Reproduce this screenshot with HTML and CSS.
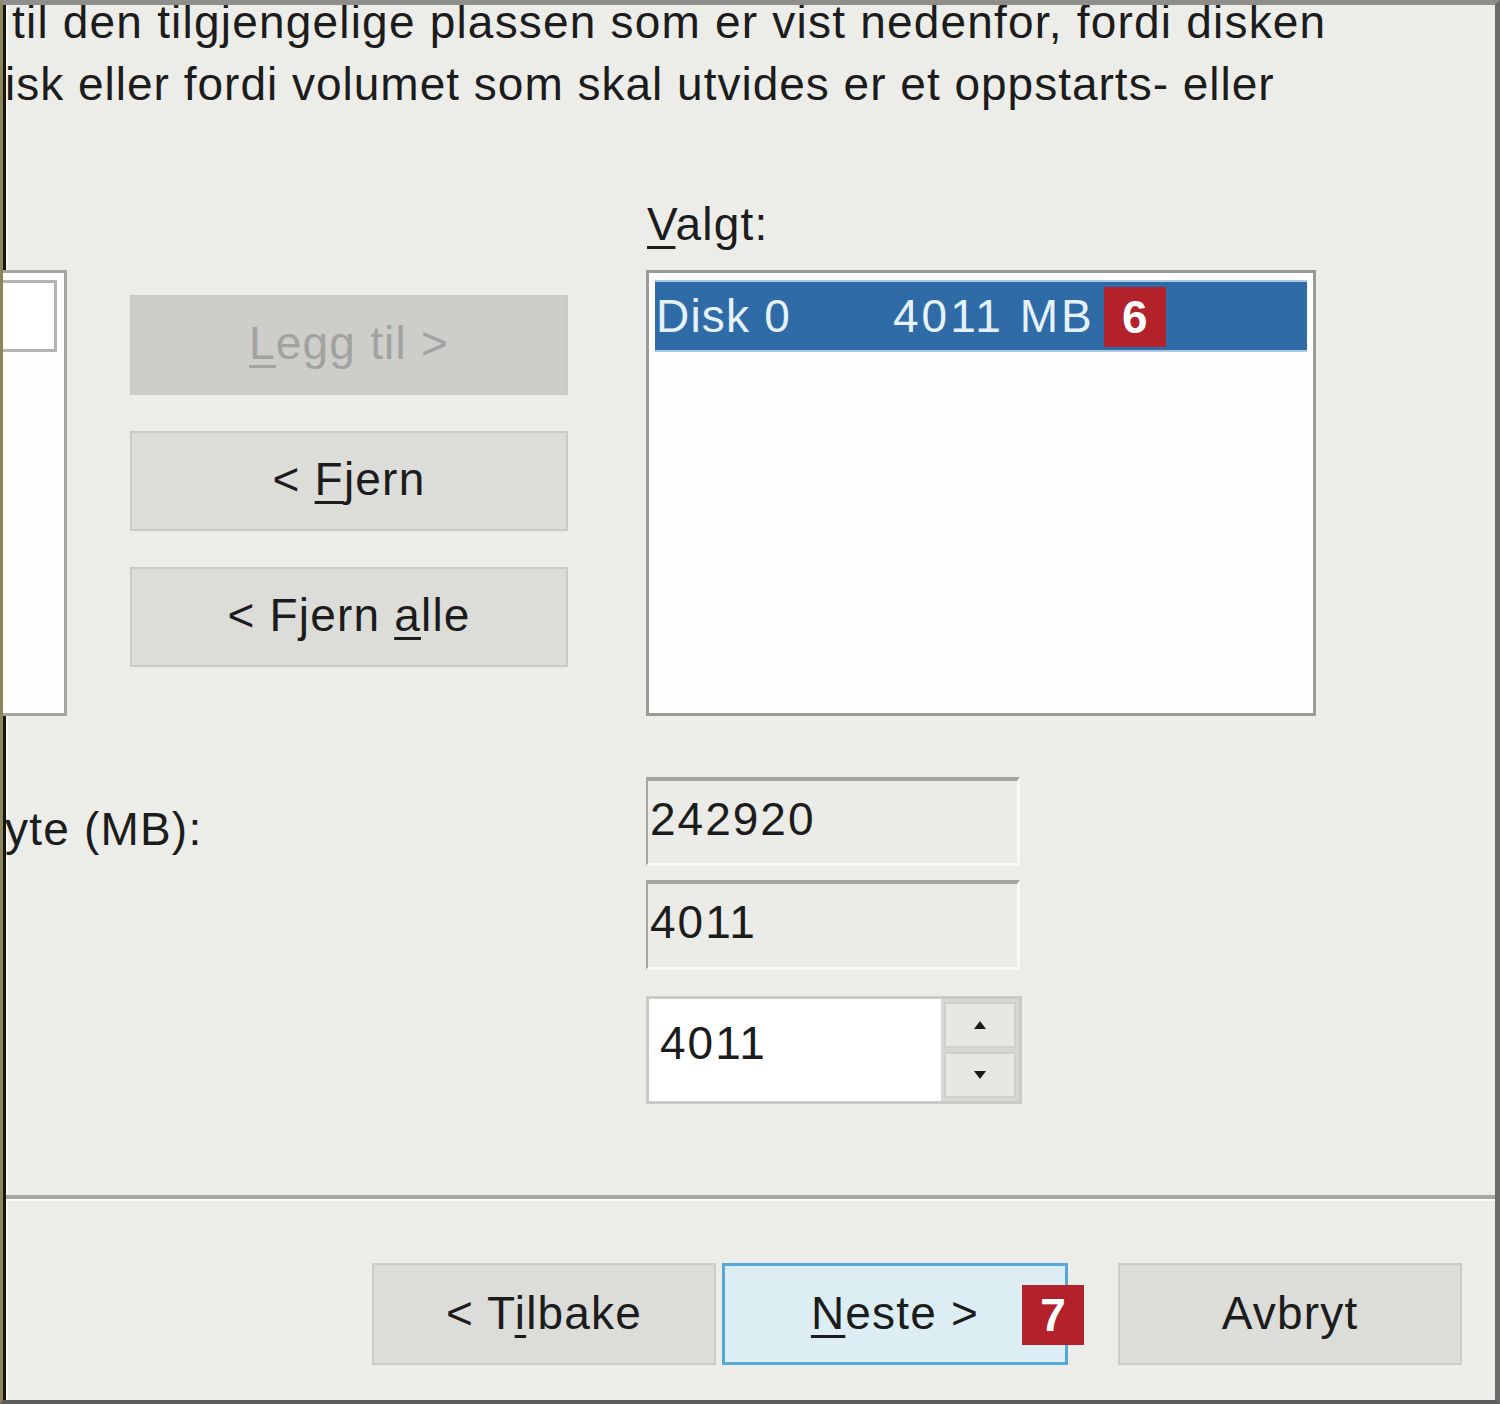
FILE: index.html
```html
<!DOCTYPE html>
<html>
<head>
<meta charset="utf-8">
<link rel="stylesheet" href="styles.css">
</head>
<body>
<div class="dialog">
  <div class="intro">
    <div class="line l1">til den tilgjengelige plassen som er vist nedenfor, fordi disken</div>
    <div class="line l2">isk eller fordi volumet som skal utvides er et oppstarts- eller</div>
  </div>

  <div class="main">
    <div class="leftcol">
      <div class="listbox-left">
        <div class="left-item"></div>
      </div>
    </div>
    <div class="midcol">
      <div class="btn disabled"><span><u>L</u>egg til &gt;</span></div>
      <div class="btn"><span>&lt; <u>F</u>jern</span></div>
      <div class="btn"><span>&lt; Fjern <u>a</u>lle</span></div>
    </div>
    <div class="rightcol">
      <div class="label"><u>V</u>algt:</div>
      <div class="listbox">
        <div class="selrow">
          <span class="disk">Disk 0</span>
          <span class="size">4011 MB</span>
          <span class="badge">6</span>
        </div>
      </div>
    </div>
  </div>

  <div class="lower">
    <div class="lowlabel">yte (MB):</div>
    <div class="fields">
      <div class="ro">242920</div>
      <div class="ro ro2">4011</div>
      <div class="spin">
        <div class="spin-input">4011</div>
        <div class="spin-btns">
          <div class="sbtn"><svg width="14" height="10" viewBox="0 0 14 10"><path d="M7 1 L13 9 L1 9 Z" fill="#1a1a1a"/></svg></div>
          <div class="sbtn"><svg width="14" height="10" viewBox="0 0 14 10"><path d="M1 1 L13 1 L7 9 Z" fill="#1a1a1a"/></svg></div>
        </div>
      </div>
    </div>
  </div>

  <div class="sep"></div>

  <div class="footer">
    <div class="fbtn"><span>&lt; T<u>i</u>lbake</span></div>
    <div class="fbtn primary"><span><u>N</u>este &gt;</span><span class="badge badge7">7</span></div>
    <div class="fbtn"><span>Avbryt</span></div>
  </div>
</div>
</body>
</html>
```

FILE: styles.css
```css
* { box-sizing: border-box; }
html, body {
  margin: 0;
  padding: 0;
  background: #ecece8;
}
body {
  font-family: "Liberation Sans", Arial, sans-serif;
  color: #1c1c1c;
  width: 1500px;
  height: 1404px;
  overflow: hidden;
  font-size: 46px;
  line-height: 61px;
  letter-spacing: 1.2px;
}
u {
  text-decoration: underline;
  text-decoration-thickness: 3px;
  text-underline-offset: 6px;
}

.dialog {
  width: 1500px;
  height: 1404px;
  background: #ecece8;
  border-top: 5px solid #8e8e8b;
  border-right: 5px solid #6a6a68;
  border-bottom: 4px solid #5c5c5a;
  border-left: 3px solid #8d8458;
  box-shadow: inset 3px 0 0 #151515, inset 5px 0 0 #f6f6f3;
  overflow: hidden;
}

.intro {
  white-space: nowrap;
}
.l1 {
  padding-left: 9px;
  line-height: 34px;
}
.l2 {
  padding-left: 2px;
  margin-top: 15px;
  letter-spacing: 1px;
}

.main {
  display: flex;
  margin-top: 79px;
}
.leftcol {
  width: 64px;
  padding-top: 76px;
}
.listbox-left {
  height: 446px;
  background: #fefefe;
  border: 3px solid #a5a5a3;
  border-left: none;
  padding-top: 7px;
  padding-right: 7px;
}
.left-item {
  height: 72px;
  border: 3px solid #b4b4b1;
  border-left: none;
  background: #fff;
}

.midcol {
  margin-left: 63px;
  width: 438px;
  padding-top: 101px;
  display: flex;
  flex-direction: column;
  gap: 36px;
}
.btn {
  height: 100px;
  background: #dcdcd9;
  border: 2px solid #cacac7;
  display: flex;
  align-items: center;
  justify-content: center;
  padding-bottom: 4px;
}
.btn.disabled {
  background: #cdcdca;
  color: #a2a2a0;
}

.rightcol {
  margin-left: 78px;
  width: 670px;
}
.label {
  height: 61px;
  margin-bottom: 15px;
  padding-left: 1px;
}
.listbox {
  height: 446px;
  background: #fefefe;
  border: 3px solid #9a9a98;
  padding: 7px 6px 0 6px;
}
.selrow {
  height: 72px;
  background: #2f6ca7;
  color: #e6f2fb;
  display: flex;
  align-items: center;
  border-top: 2px solid #a9cbe6;
  border-bottom: 2px solid #a9cbe6;
}
.disk {
  width: 238px;
  padding-left: 1px;
}
.size {
  letter-spacing: 3px;
}
.badge {
  display: inline-flex;
  align-items: center;
  justify-content: center;
  width: 62px;
  height: 60px;
  background: #b3212b;
  color: #fff;
  font-weight: bold;
  font-size: 46px;
  line-height: 60px;
  letter-spacing: 0;
  margin-left: 9px;
  margin-top: 2px;
}

.lower {
  display: flex;
  margin-top: 61px;
}
.lowlabel {
  width: 643px;
  padding-top: 22px;
  padding-left: 2px;
}
.fields {
  width: 376px;
  display: flex;
  flex-direction: column;
}
.ro {
  height: 89px;
  width: 374px;
  background: #ebebe7;
  border-top: 4px solid #a4a4a1;
  border-left: 2px solid #a4a4a1;
  border-right: 3px solid #f8f8f5;
  border-bottom: 3px solid #f8f8f5;
  padding: 8px 0 0 2px;
  letter-spacing: 2px;
}
.ro2 {
  margin-top: 14px;
  height: 90px;
}
.spin {
  margin-top: 26px;
  height: 108px;
  width: 376px;
  display: flex;
  border: 3px solid #c9c9c6;
  background: #fff;
}
.spin-input {
  flex: 1;
  padding: 14px 0 0 11px;
  background: #fff;
  letter-spacing: 2px;
}
.spin-btns {
  width: 78px;
  display: flex;
  flex-direction: column;
  gap: 4px;
  background: #d6d6d3;
  padding: 3px;
}
.sbtn {
  flex: 1;
  background: #e7e7e4;
  border: 2px solid #d0d0cd;
  display: flex;
  align-items: center;
  justify-content: center;
}

.sep {
  margin-top: 91px;
  height: 6px;
  border-top: 4px solid #a6a6a3;
  border-bottom: 2px solid #fbfbf8;
  margin-left: 3px;
}

.footer {
  display: flex;
  margin-top: 62px;
  padding-left: 369px;
}
.fbtn {
  width: 344px;
  height: 102px;
  background: #dcdcd9;
  border: 2px solid #cbcbc8;
  display: flex;
  align-items: center;
  justify-content: center;
  padding-bottom: 2px;
}
.fbtn + .fbtn { margin-left: 6px; }
.fbtn.primary {
  width: 346px;
  background: #dceef4;
  border: 3px solid #57a8d8;
  position: relative;
}
.fbtn.primary + .fbtn { margin-left: 50px; }
.badge7 {
  position: absolute;
  left: 297px;
  top: 19px;
  margin: 0;
}
```
